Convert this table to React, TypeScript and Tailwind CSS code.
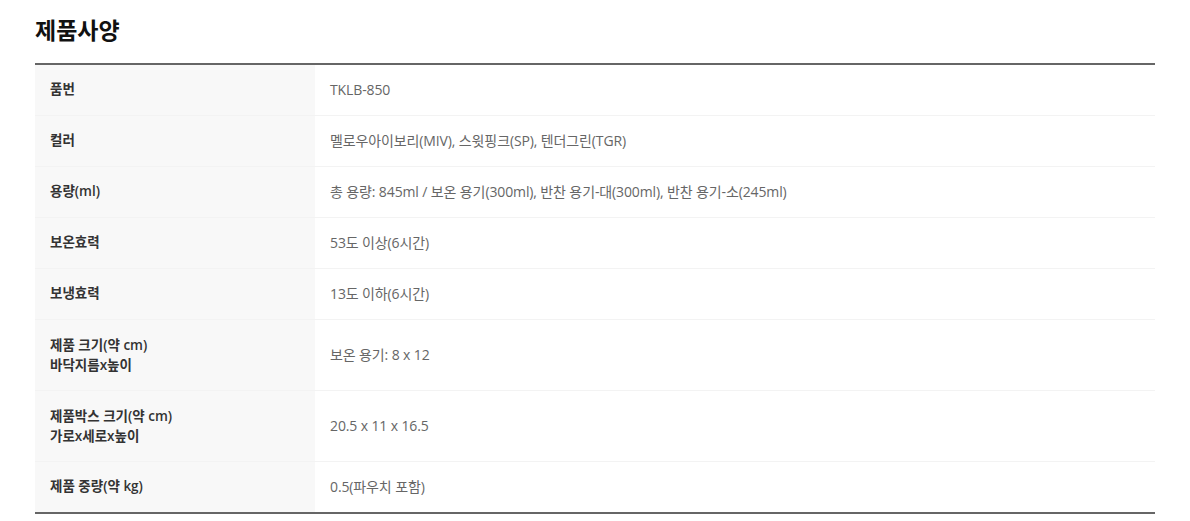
import React from "react";

const rows: { label: string[]; value: string }[] = [
  { label: ["품번"], value: "TKLB-850" },
  { label: ["컬러"], value: "멜로우아이보리(MIV), 스윗핑크(SP), 텐더그린(TGR)" },
  { label: ["용량(ml)"], value: "총 용량: 845ml / 보온 용기(300ml), 반찬 용기-대(300ml), 반찬 용기-소(245ml)" },
  { label: ["보온효력"], value: "53도 이상(6시간)" },
  { label: ["보냉효력"], value: "13도 이하(6시간)" },
  { label: ["제품 크기(약 cm)", "바닥지름x높이"], value: "보온 용기: 8 x 12" },
  { label: ["제품박스 크기(약 cm)", "가로x세로x높이"], value: "20.5 x 11 x 16.5" },
  { label: ["제품 중량(약 kg)"], value: "0.5(파우치 포함)" },
];

export default function App() {
  return (
    <div
      className="w-[1190px] h-[521px] bg-white"
      style={{ fontFamily: '"Open Sans", "Noto Sans CJK KR", sans-serif' }}
    >
      <div className="ml-[35px] w-[1120px] pt-[15px]">
        <h2 className="text-[23px] leading-[31px] font-bold text-[#111] mb-[17px]">
          제품사양
        </h2>
        <div className="border-t-2 border-b-2 border-[#666]">
          {rows.map((r, i) => {
            const last = i === rows.length - 1;
            const two = r.label.length > 1;
            return (
              <div
                key={i}
                className={`flex ${last ? "h-[50px]" : two ? "h-[71px] border-b border-[#f3f3f3]" : "h-[51px] border-b border-[#f3f3f3]"}`}
              >
                <div
                  className={`w-[280px] bg-[#f8f8f8] flex flex-col justify-center pl-[15px] text-[13.5px] leading-[20px] font-semibold text-[#333] ${two ? "" : "pb-[3px]"}`}
                >
                  {r.label.map((l, j) => (
                    <div key={j}>{l}</div>
                  ))}
                </div>
                <div className="flex-1 flex items-center pl-[15px] pb-[2px] text-[14px] tracking-[-0.12px] text-[#666]">
                  {r.value}
                </div>
              </div>
            );
          })}
        </div>
      </div>
    </div>
  );
}
